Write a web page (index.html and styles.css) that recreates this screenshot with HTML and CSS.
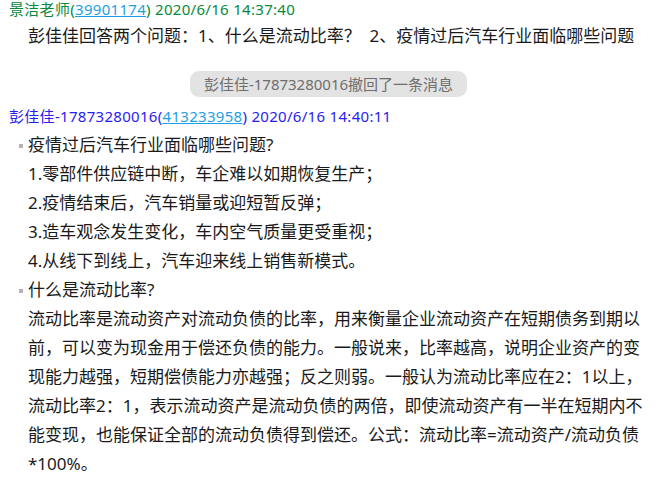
FILE: index.html
```html
<!DOCTYPE html>
<html lang="zh-CN">
<head>
    <meta charset="UTF-8">
    <title>聊天记录</title>
    <link rel="stylesheet" href="styles.css">
</head>
<body>
<div class="chat">
    <div class="msg">
        <div class="msg-head teacher">景洁老师(<a class="qq" href="#">39901174</a>) 2020/6/16 14:37:40</div>
        <div class="msg-text">彭佳佳回答两个问题：1、什么是流动比率？&nbsp;&nbsp;2、疫情过后汽车行业面临哪些问题</div>
    </div>

    <div class="notice">
        <span class="notice-pill">彭佳佳-17873280016撤回了一条消息</span>
    </div>

    <div class="msg">
        <div class="msg-head student">彭佳佳-17873280016(<a class="qq" href="#">413233958</a>) 2020/6/16 14:40:11</div>
        <ul class="answer">
            <li class="topic">疫情过后汽车行业面临哪些问题?</li>
            <li>1.零部件供应链中断，车企难以如期恢复生产；</li>
            <li>2.疫情结束后，汽车销量或迎短暂反弹；</li>
            <li>3.造车观念发生变化，车内空气质量更受重视；</li>
            <li>4.从线下到线上，汽车迎来线上销售新模式。</li>
            <li class="topic">什么是流动比率?</li>
            <li>流动比率是流动资产对流动负债的比率，用来衡量企业流动资产在短期债务到期以前，可以变为现金用于偿还负债的能力。一般说来，比率越高，说明企业资产的变现能力越强，短期偿债能力亦越强；反之则弱。一般认为流动比率应在2：1以上，流动比率2：1，表示流动资产是流动负债的两倍，即使流动资产有一半在短期内不能变现，也能保证全部的流动负债得到偿还。公式：流动比率=流动资产/流动负债*100%。</li>
        </ul>
    </div>
</div>
</body>
</html>
```

FILE: styles.css
```css
html, body {
    margin: 0;
    overflow: hidden;
}
body {
    background: #fff;
    font-family: "Noto Sans", "Noto Sans CJK SC", sans-serif;
    color: #1a1a1a;
}
.chat {
    padding: 0 17px 0 9px;
}
.msg-head {
    font-size: 15px;
    line-height: 18px;
    letter-spacing: 0.3px;
    white-space: nowrap;
}
.teacher {
    color: #078a3c;
}
.student {
    color: #2a1cf2;
    margin-top: 10px;
}
.qq {
    color: #1e9fe6;
    text-decoration: underline;
}
.msg-text {
    font-size: 17px;
    line-height: 28px;
    margin-top: 4px;
    padding-left: 19px;
}
.notice {
    display: flex;
    justify-content: center;
    margin-top: 21px;
}
.notice-pill {
    background: #e3e3e3;
    color: #6e6e6e;
    font-size: 15px;
    line-height: 26px;
    padding: 0 14px;
    border-radius: 9px;
}
.answer {
    list-style: none;
    margin: 5px 0 0;
    padding: 0 0 0 19px;
    font-size: 17px;
    line-height: 29px;
}
.answer .topic::before {
    content: "";
    display: inline-block;
    width: 4px;
    height: 4px;
    background: #b3b3b3;
    margin-left: -9px;
    margin-right: 5px;
    vertical-align: middle;
}
```
